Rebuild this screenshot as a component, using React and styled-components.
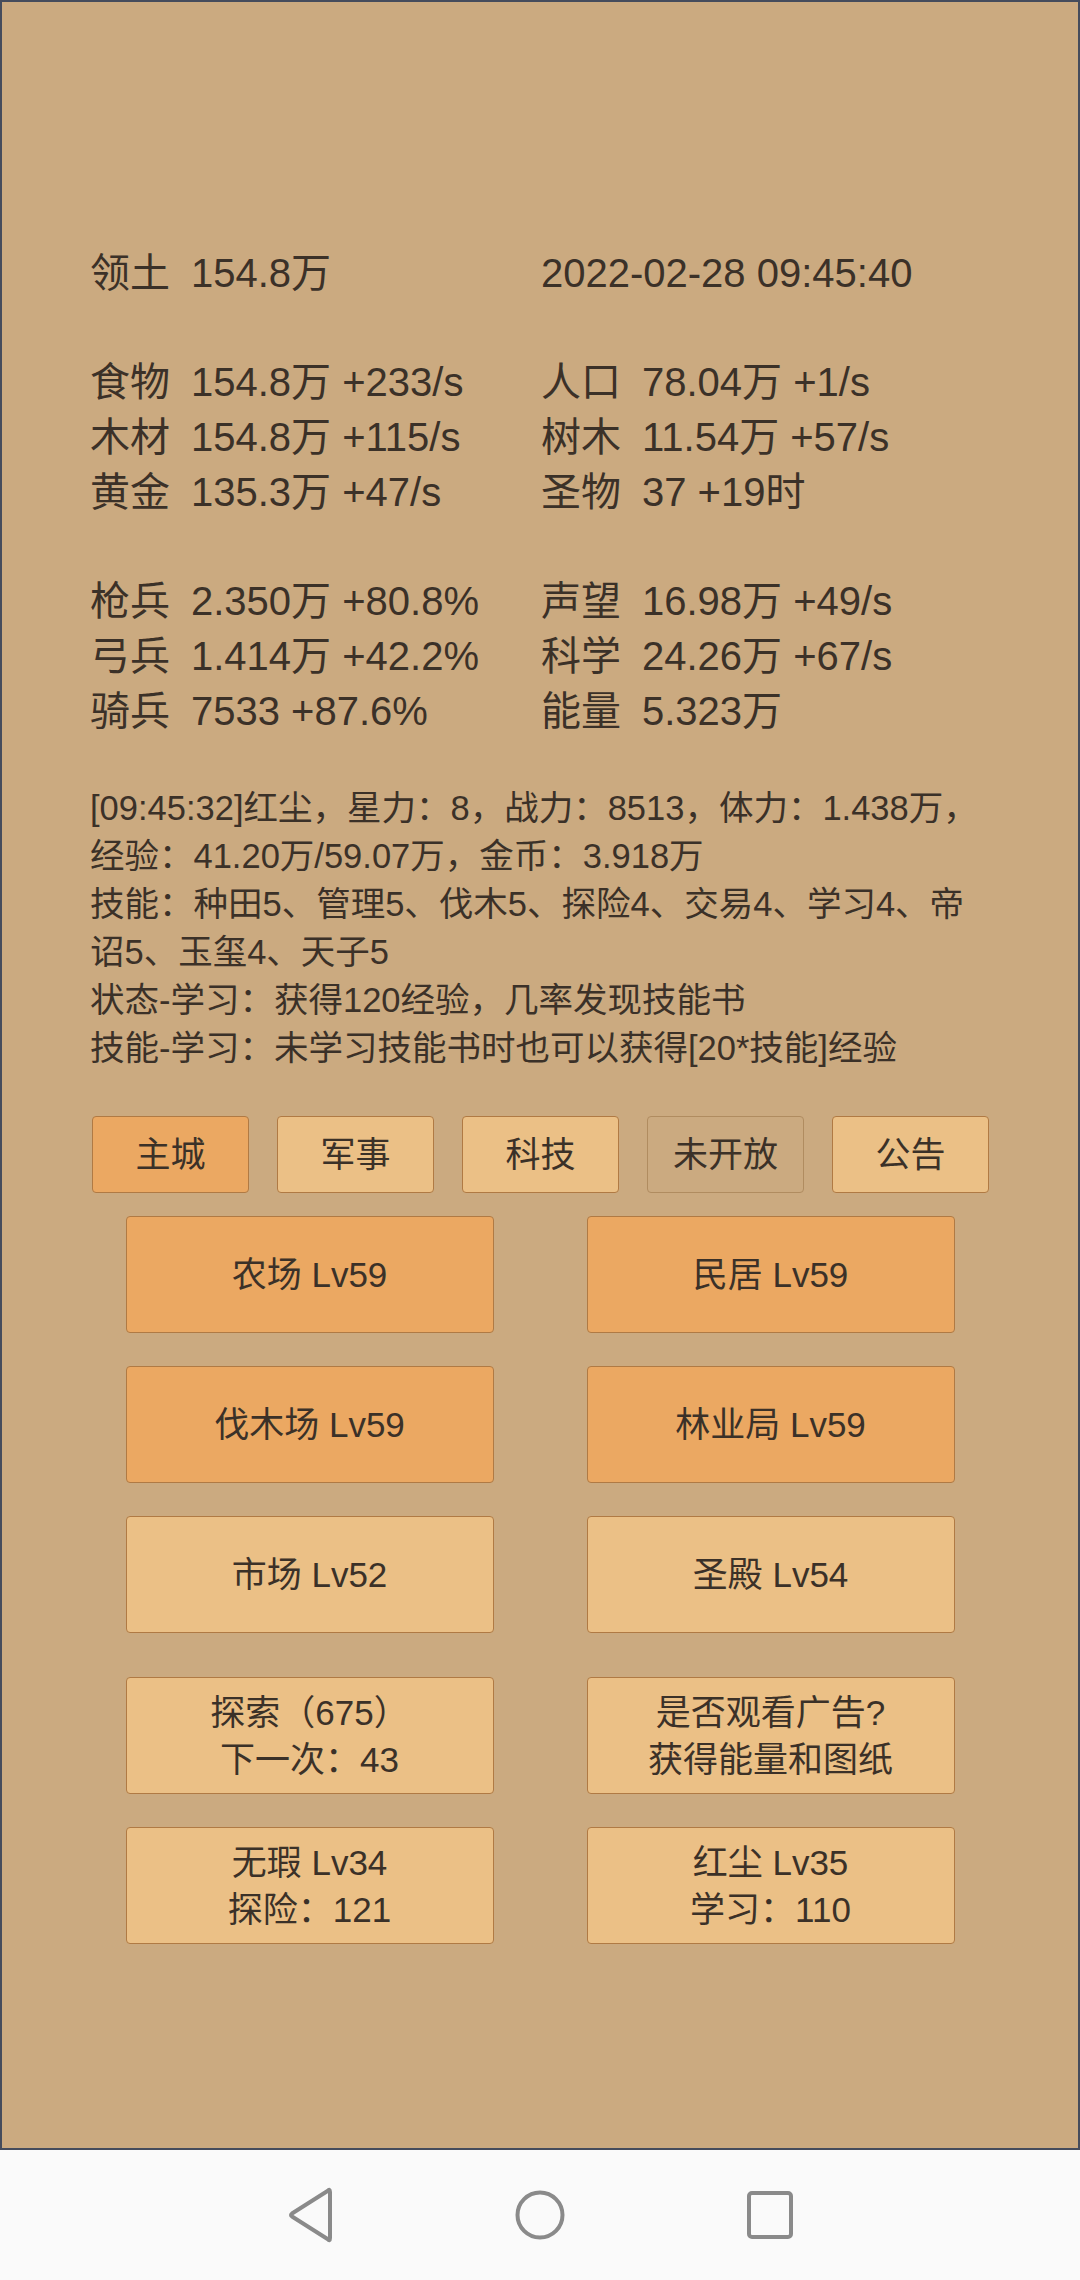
import React from "react";
import styled, { createGlobalStyle } from "styled-components";

const GlobalStyle = createGlobalStyle`
  html, body {
    margin: 0;
    padding: 0;
    background: #fafafa;
  }
  body {
    font-family: "Liberation Sans", "Noto Sans CJK SC", sans-serif;
  }
`;

const stats = [
  [
    { label: "食物", value: "154.8万 +233/s" },
    { label: "人口", value: "78.04万 +1/s" },
  ],
  [
    { label: "木材", value: "154.8万 +115/s" },
    { label: "树木", value: "11.54万 +57/s" },
  ],
  [
    { label: "黄金", value: "135.3万 +47/s" },
    { label: "圣物", value: "37 +19时" },
  ],
];

const army = [
  [
    { label: "枪兵", value: "2.350万 +80.8%" },
    { label: "声望", value: "16.98万 +49/s" },
  ],
  [
    { label: "弓兵", value: "1.414万 +42.2%" },
    { label: "科学", value: "24.26万 +67/s" },
  ],
  [
    { label: "骑兵", value: "7533 +87.6%" },
    { label: "能量", value: "5.323万" },
  ],
];

const tabs = [
  { name: "主城", mode: "active" },
  { name: "军事", mode: "normal" },
  { name: "科技", mode: "normal" },
  { name: "未开放", mode: "disabled" },
  { name: "公告", mode: "normal" },
];

const buildings = [
  { lines: ["农场 Lv59"], active: true },
  { lines: ["民居 Lv59"], active: true },
  { lines: ["伐木场 Lv59"], active: true },
  { lines: ["林业局 Lv59"], active: true },
  { lines: ["市场 Lv52"] },
  { lines: ["圣殿 Lv54"] },
];

const extras = [
  { lines: ["探索（675）", "下一次：43"] },
  { lines: ["是否观看广告?", "获得能量和图纸"] },
  { lines: ["无瑕 Lv34", "探险：121"] },
  { lines: ["红尘 Lv35", "学习：110"] },
];

const StatGrid = ({ rows }) => (
  <Section>
    {rows.map((row, i) => (
      <StatRow key={i}>
        {row.map((s) => (
          <Stat key={s.label}>
            <Label>{s.label}</Label>
            <span>{s.value}</span>
          </Stat>
        ))}
      </StatRow>
    ))}
  </Section>
);

const App = () => {
  return (
    <Screen>
      <GlobalStyle />
      <Frame>
        <StatRow>
          <Stat>
            <Label>领土</Label>
            <span>154.8万</span>
          </Stat>
          <Stat>2022-02-28 09:45:40</Stat>
        </StatRow>

        <Spacer />
        <StatGrid rows={stats} />
        <Spacer />
        <StatGrid rows={army} />

        <Log>
          <div>
            [09:45:32]红尘，星力：8，战力：8513，体力：1.438万，经验：41.20万/59.07万，金币：3.918万
          </div>
          <div>
            技能：种田5、管理5、伐木5、探险4、交易4、学习4、帝诏5、玉玺4、天子5
          </div>
          <div>状态-学习：获得120经验，几率发现技能书</div>
          <div>技能-学习：未学习技能书时也可以获得[20*技能]经验</div>
        </Log>

        <Tabs>
          {tabs.map((t) => (
            <Tab key={t.name} $mode={t.mode}>
              {t.name}
            </Tab>
          ))}
        </Tabs>

        <ButtonGrid>
          {buildings.map((b) => (
            <BigButton key={b.lines[0]} $active={b.active}>
              {b.lines.map((l) => (
                <div key={l}>{l}</div>
              ))}
            </BigButton>
          ))}
        </ButtonGrid>

        <ButtonGrid $top={44}>
          {extras.map((b) => (
            <BigButton key={b.lines[0]}>
              {b.lines.map((l) => (
                <div key={l}>{l}</div>
              ))}
            </BigButton>
          ))}
        </ButtonGrid>
      </Frame>

      <NavBar>
        <NavIcon>
          <svg width="60" height="60" viewBox="0 0 60 60">
            <path
              d="M50 7 L50 53 Q50 57 47.5 54 L12 31.5 Q10 30 12 28.5 L47.5 6 Q50 3 50 7 Z"
              fill="none"
              stroke="#8a8a8a"
              strokeWidth="4"
              strokeLinejoin="round"
            />
          </svg>
        </NavIcon>
        <NavIcon>
          <svg width="60" height="60" viewBox="0 0 60 60">
            <circle cx="30" cy="30" r="22.5" fill="none" stroke="#8a8a8a" strokeWidth="4" />
          </svg>
        </NavIcon>
        <NavIcon>
          <svg width="60" height="60" viewBox="0 0 60 60">
            <rect x="9" y="8" width="42" height="44" rx="3" fill="none" stroke="#8a8a8a" strokeWidth="4" />
          </svg>
        </NavIcon>
      </NavBar>
    </Screen>
  );
};

const Screen = styled.div`
  width: 1080px;
  height: 2280px;
  display: flex;
  flex-direction: column;
  background: #fafafa;
`;

const Frame = styled.div`
  flex: 1;
  box-sizing: border-box;
  background: #cbaa80;
  border: 2px solid #454c5c;
  padding: 244px 88px 0 88px;
  color: #3b3128;
  font-size: 40px;
  line-height: 55px;
`;

const Section = styled.div``;

const Spacer = styled.div`
  height: 54px;
`;

const StatRow = styled.div`
  display: grid;
  grid-template-columns: 451px 1fr;
  white-space: nowrap;
`;

const Stat = styled.div`
  display: flex;
`;

const Label = styled.span`
  width: 101px;
  flex: none;
`;

const Log = styled.div`
  margin-top: 45px;
  font-size: 34.5px;
  line-height: 48px;
  width: 902px;
`;

const Tabs = styled.div`
  margin-top: 44px;
  margin-left: 2px;
  display: grid;
  grid-template-columns: repeat(5, 157px);
  column-gap: 28px;
`;

const tabColors = {
  active: "#eba862",
  normal: "#ebc086",
  disabled: "#cbaa80",
};

const Tab = styled.div`
  height: 77px;
  box-sizing: border-box;
  display: flex;
  align-items: center;
  justify-content: center;
  background: ${(p) => tabColors[p.$mode]};
  border: 1.5px solid ${(p) => (p.$mode === "disabled" ? "#b08c60" : "#b07a44")};
  border-radius: 4px;
  font-size: 35px;
`;

const ButtonGrid = styled.div`
  margin-top: ${(p) => p.$top || 23}px;
  display: grid;
  grid-template-columns: repeat(2, 368px);
  justify-content: center;
  column-gap: 93px;
  row-gap: 33px;
`;

const BigButton = styled.div`
  height: 117px;
  box-sizing: border-box;
  display: flex;
  flex-direction: column;
  align-items: center;
  justify-content: center;
  background: ${(p) => (p.$active ? "#eba862" : "#ebc086")};
  border: 1.5px solid #b07a44;
  border-radius: 4px;
  font-size: 35px;
  line-height: 47px;
`;

const NavBar = styled.div`
  height: 130px;
  flex: none;
  display: flex;
  align-items: center;
  justify-content: center;
  gap: 170px;
  background: #fafafa;
`;

const NavIcon = styled.div`
  width: 60px;
  height: 60px;
  display: flex;
`;

export default App;
